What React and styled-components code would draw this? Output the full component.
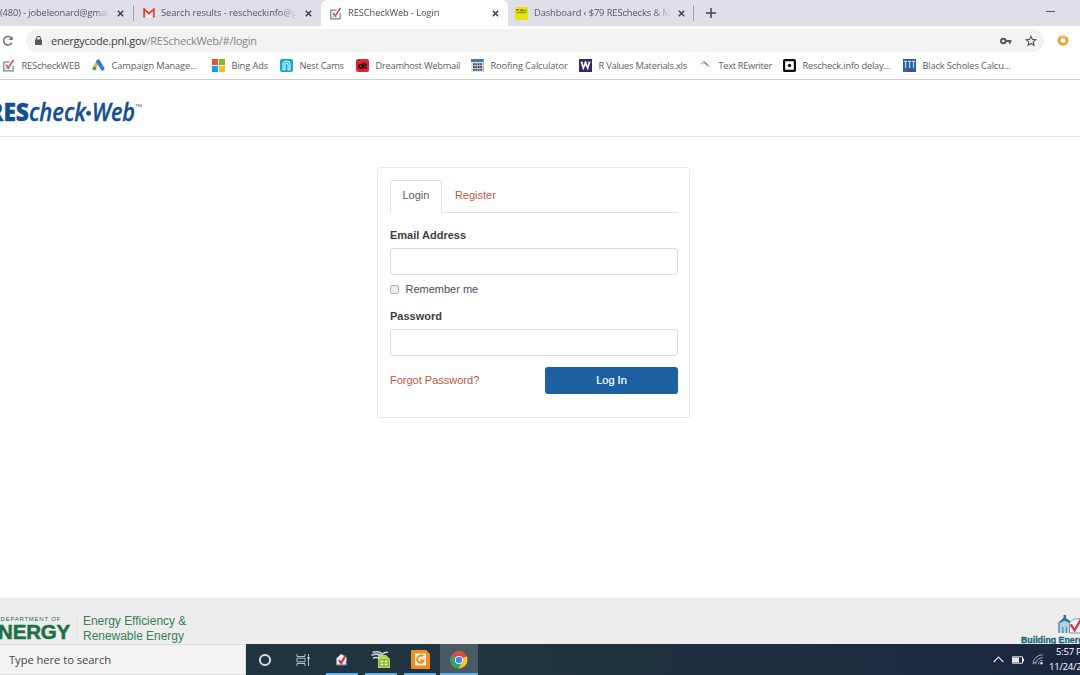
import React from "react";
import styled, { createGlobalStyle } from "styled-components";

const ui = `"Open Sans", "Noto Sans", sans-serif`;
const web = `"Liberation Sans", Arial, sans-serif`;

const TickIcon = ({ size = 13 }) => (
  <svg width={size} height={size} viewBox="0 0 13 13" fill="none">
    <path d="M7.5 3.2H1.8v8.6h9.3V6.5" stroke="#6686a4" strokeWidth="1.2" />
    <path d="M3.2 5.8h3M3.2 9.8h5" stroke="#a8c0d2" />
    <path d="M4.2 6.2 6.3 8.9 11.4 1" stroke="#d5564f" strokeWidth="1.7" />
  </svg>
);

const GmailIcon = () => (
  <svg width="12" height="10" viewBox="0 0 12 10" fill="none">
    <path d="M1.5 1h9v8h-9z" fill="#f5eeee" />
    <path d="M1.2 9.5V1.2L6 5.4l4.8-4.2v8.3" stroke="#d54b3d" strokeWidth="1.9" />
  </svg>
);

const DashIcon = () => (
  <svg width="13" height="13" viewBox="0 0 13 13">
    <path fill="#e6e600" d="M0 0h13v13H0z" />
    <path d="M1 2.8h3.2M5 2.8h3" stroke="#c75c24" strokeWidth="1.5" />
    <path d="M5 3.6h7M1.5 5.4h10" stroke="#8aa51d" strokeWidth="1.5" />
  </svg>
);

const AdsIcon = () => (
  <svg width="13" height="12" viewBox="0 0 13 12" fill="none" strokeLinecap="round">
    <path d="M5.6 2.8 2.4 9.2" stroke="#f4b820" strokeWidth="3.4" />
    <path d="M6.2 2.4 10.4 9.6" stroke="#3875df" strokeWidth="4" />
    <circle cx="2.4" cy="9.4" r="1.9" fill="#35a568" />
  </svg>
);

const BingIcon = () => (
  <svg width="13" height="13" viewBox="0 0 13 13">
    <path fill="#ed5129" d="M0 0h6v6H0z" />
    <path fill="#80b921" d="M7 0h6v6H7z" />
    <path fill="#0ba4e8" d="M0 7h6v6H0z" />
    <path fill="#fdba16" d="M7 7h6v6H7z" />
  </svg>
);

const NestIcon = () => (
  <svg width="13" height="13" viewBox="0 0 13 13" fill="none">
    <rect width="13" height="13" rx="2" fill="#18a8c8" />
    <path d="M3 10.8V5.7a3.5 3.5 0 0 1 7 0v5.1H8.1V6a1.6 1.6 0 0 0-3.2 0v4.8z" stroke="#e9f8fb" strokeWidth="1.1" />
  </svg>
);

const DreamIcon = () => (
  <svg width="13" height="13" viewBox="0 0 13 13" fill="none">
    <rect width="13" height="13" rx="2" fill="#d92830" />
    <circle cx="4.8" cy="7.3" r="1.8" stroke="#300b0c" strokeWidth="1.7" />
    <path d="M7.1 3.8v5.6M9.4 3.4v6h1.4M8.3 5.6h2.8" stroke="#300b0c" strokeWidth="1.4" />
  </svg>
);

const CalcIcon = () => (
  <svg width="13" height="13" viewBox="0 0 13 13">
    <path fill="#dde4e9" d="M0 0h13v13H0z" />
    <path fill="#4b7ba7" d="M0 0h13v3H0z" />
    <path d="M2 5.2h9M2 8h9M2 10.8h9" stroke="#3d4b58" strokeWidth="1.9" strokeDasharray="1.8 .6" />
    <path d="M12.5 1v12" stroke="#95afc4" />
  </svg>
);

const WIcon = () => (
  <svg width="13" height="13" viewBox="0 0 13 13" fill="none">
    <path fill="#382763" d="M0 0h13v13H0z" />
    <path d="M2.6 3.2 4.3 9 6.5 3.8 8.7 9l1.8-5.8" stroke="#fff" strokeWidth="1.7" />
    <path d="M1.4 3.2h2.5M5.4 3.2h2.2M9.2 3.2h2.4" stroke="#fff" />
  </svg>
);

const PenIcon = () => (
  <svg width="13" height="13" viewBox="0 0 13 13" fill="none">
    <path d="M2 5.2 5 3l5 4.4" stroke="#e398a6" strokeWidth="1.4" />
    <path d="m5 3 3.4 3.2" stroke="#cf6680" strokeWidth="1.2" />
  </svg>
);

const SquareIcon = () => (
  <svg width="13" height="13" viewBox="0 0 13 13" fill="none">
    <rect x="1.1" y="1.1" width="10.8" height="10.8" rx=".6" stroke="#0b0b0b" strokeWidth="2.2" />
    <circle cx="6.5" cy="6.5" r="1.7" fill="#111" />
  </svg>
);

const ScholesIcon = () => (
  <svg width="13" height="13" viewBox="0 0 13 13" fill="none">
    <path fill="#255f9e" d="M0 0h13v13H0z" />
    <path d="M.8 2.3h3.4M4.9 2.3h3.4M9 2.3h3.2M2.6 2.3v7M6.6 2.3v7M10.5 2.3v7" stroke="#b4d6f1" strokeWidth="1.3" />
    <path d="M0 11.8h4" stroke="#2a7d6c" strokeWidth="1.6" />
    <path d="M4 11.8h5" stroke="#8a345d" strokeWidth="1.6" />
  </svg>
);

const CloseIcon = () => (
  <svg width="7" height="7" viewBox="0 0 7 7">
    <path d="m.8.8 5.4 5.4M6.2.8.8 6.2" stroke="#3f4045" strokeWidth="1.5" />
  </svg>
);

const TABS = [
  { id: 1, width: 134, pad: 0, textWidth: 109, title: "(480) - jobeleonard@gmai", spacing: -0.12, divider: true },
  { id: 2, width: 187, pad: 8, textWidth: 136, title: "Search results - rescheckinfo@gm", spacing: -0.05, icon: <GmailIcon /> },
  { id: 3, width: 187, pad: 8, textWidth: 136, title: "RESCheckWeb - Login", spacing: -0.08, icon: <TickIcon />, active: true },
  { id: 4, width: 186, pad: 7, textWidth: 136, title: "Dashboard ‹ $79 RESchecks & M", spacing: -0.08, icon: <DashIcon />, divider: true }
];

const BOOKMARKS = [
  { name: "REScheckWEB", width: 90, spacing: -0.2, icon: <TickIcon /> },
  { name: "Campaign Manage...", width: 120, spacing: -0.14, icon: <AdsIcon /> },
  { name: "Bing Ads", width: 68, spacing: -0.12, icon: <BingIcon /> },
  { name: "Nest Cams", width: 76, spacing: -0.25, icon: <NestIcon /> },
  { name: "Dreamhost Webmail", width: 115, spacing: -0.25, icon: <DreamIcon /> },
  { name: "Roofing Calculator", width: 108, spacing: -0.12, icon: <CalcIcon /> },
  { name: "R Values Materials.xls", width: 120, spacing: -0.22, icon: <WIcon /> },
  { name: "Text REwriter", width: 84, spacing: -0.32, icon: <PenIcon /> },
  { name: "Rescheck.info delay...", width: 120, spacing: -0.2, icon: <SquareIcon /> },
  { name: "Black Scholes Calcu...", width: 120, spacing: -0.15, icon: <ScholesIcon /> }
];

const Browser = () => (
  <>
    <TabStrip>
      {TABS.map(tab => (
        <Tab key={tab.id} $width={tab.width} $pad={tab.pad} $active={tab.active} $divider={tab.divider}>
          {tab.icon && <TabIcon>{tab.icon}</TabIcon>}
          <TabTitle $width={tab.textWidth} $spacing={tab.spacing} $active={tab.active}>{tab.title}</TabTitle>
          <CloseIcon />
        </Tab>
      ))}
      <NewTab>
        <svg width="10" height="10" viewBox="0 0 10 10">
          <path d="M5 0v10M0 5h10" stroke="#3f4045" strokeWidth="1.5" />
        </svg>
      </NewTab>
      <Minimize />
    </TabStrip>
    <Toolbar>
      <svg width="12" height="12" viewBox="0 0 12 12" fill="none">
        <path d="M9.6 3.4A4.3 4.3 0 1 0 9.8 7.6" stroke="#66676a" strokeWidth="1.4" />
        <path d="M10.6 1.2v3.9H6.7z" fill="#66676a" />
      </svg>
      <Omnibox>
        <svg width="7" height="9" viewBox="0 0 7 9" fill="none">
          <path d="M0 3.5h7V9H0z" fill="#58595c" />
          <path d="M1.6 4V2.3a1.9 1.9 0 0 1 3.8 0V4" stroke="#58595c" strokeWidth="1.1" />
        </svg>
        <Url>energycode.pnl.gov<span>/REScheckWeb/#/login</span></Url>
        <svg width="12" height="8" viewBox="0 0 12 8" fill="none">
          <circle cx="3.4" cy="4" r="2.3" stroke="#58595c" strokeWidth="2" />
          <path d="M5.5 4h6M9.8 4v2.8" stroke="#58595c" strokeWidth="2" />
        </svg>
        <svg width="12" height="12" viewBox="0 0 12 12" fill="none">
          <path d="m6 1.3 1.4 3.1 3.4.3-2.6 2.2.8 3.4L6 8.5l-3 1.8.8-3.4L1.2 4.7l3.4-.3z" stroke="#58595c" strokeWidth="1.1" />
        </svg>
      </Omnibox>
      <svg width="12" height="11" viewBox="0 0 12 11" fill="none">
        <ellipse cx="6" cy="5.5" rx="4.1" ry="3.7" stroke="#eda02b" strokeWidth="2.8" />
        <path d="M3 2.2a5 4 0 0 1 6 0" stroke="#f6ca70" strokeWidth="1.2" />
      </svg>
    </Toolbar>
    <BookmarkBar>
      {BOOKMARKS.map(b => (
        <Bookmark key={b.name} $width={b.width}>
          {b.icon}
          <BookmarkName $spacing={b.spacing}>{b.name}</BookmarkName>
        </Bookmark>
      ))}
    </BookmarkBar>
  </>
);

const LoginCard = () => (
  <Card>
    <CardTabs>
      <CardTab $active>Login</CardTab>
      <CardTab>Register</CardTab>
    </CardTabs>
    <FieldLabel htmlFor="email">Email Address</FieldLabel>
    <Field id="email" />
    <Remember>
      <Checkbox type="checkbox" />
      Remember me
    </Remember>
    <FieldLabel htmlFor="password">Password</FieldLabel>
    <Field id="password" type="password" />
    <Actions>
      <Forgot>Forgot Password?</Forgot>
      <Submit>Log In</Submit>
    </Actions>
  </Card>
);

const Footer = () => (
  <FooterBar>
    <Doe>
      <DoeSmall>DEPARTMENT OF</DoeSmall>
      <DoeName>ENERGY</DoeName>
    </Doe>
    <Office>
      Energy Efficiency &amp;
      <br />
      Renewable Energy
    </Office>
    <Codes>
      <svg width="30" height="20" viewBox="0 0 30 20" fill="none">
        <path d="M1 18V8.5l6.5-5 6.5 5V18z" fill="#b4d3dc" />
        <path d="M0 9.2 3 6l4.5-4L13 6l2 3.2-7.5-3.4zM6.5 4V0h2.6v4z" fill="#30768e" />
        <path d="M12.5 18V8.2c2-4 8-6 13.5-3.2l3 4V18z" fill="#edf4f5" stroke="#6c9fae" />
        <path d="M2 9v9M5.8 12v6M9.5 12v6" stroke="#5595a8" strokeWidth="1.4" />
        <path d="m13.8 9.5 3.8 5.8L25 2.5" stroke="#d63846" strokeWidth="2.4" />
      </svg>
      <CodesName>Building Energy Codes</CodesName>
    </Codes>
  </FooterBar>
);

const Taskbar = () => (
  <TaskbarWrap>
    <Search>Type here to search</Search>
    <TaskItem $width={37}>
      <svg width="14" height="14" viewBox="0 0 14 14">
        <circle cx="7" cy="7" r="5.1" fill="none" stroke="#d8e0e4" strokeWidth="2" />
      </svg>
    </TaskItem>
    <TaskItem $width={39}>
      <svg width="14" height="12" viewBox="0 0 14 12" fill="none">
        <path d="M1 0v2.5h8V0M1 12V9.5h8V12M1 4.2h8v3.6H1zM12.5 0v2.6M12.5 5v7" stroke="#b5c0c4" />
        <path fill="#dfe5e7" d="M11.5 3h2v2h-2z" />
      </svg>
    </TaskItem>
    <TaskItem $width={40} $open>
      <svg width="12" height="13" viewBox="0 0 12 13" fill="none">
        <path d="M.5 12V5.5L5 1l5.5 3v8z" fill="#edf0f5" />
        <path d="M1 12.2h9.5V8" stroke="#4e62a5" strokeWidth="1.3" />
        <path d="m2.8 7.2 2.4 3 4.5-8" stroke="#d72f3e" strokeWidth="2.1" />
      </svg>
    </TaskItem>
    <TaskItem $width={38} $open>
      <svg width="20" height="19" viewBox="0 0 20 19" fill="none">
        <path d="M7 5h8l4 4v9H7z" fill="#b8d653" />
        <path d="M9 10h8v5.8H9z" fill="#f1f7dc" stroke="#6f9b28" />
        <path d="M13 10v6M9 13h8" stroke="#6f9b28" />
        <path d="M1.5 2.2c5-1 8-.5 10 2 2-2 3.5-2.2 5.5-1.7M.5 5.2c4-1.5 8-1.2 10.5.8M2 8.3c2-1 4-1 6 0" stroke="#c9d6da" strokeWidth="1.6" />
      </svg>
    </TaskItem>
    <TaskItem $width={40} $open>
      <svg width="19" height="19" viewBox="0 0 19 19" fill="none">
        <path d="M0 0h15l4 4v15H0z" fill="#ee8d22" />
        <path d="M4 3.5h11v12H4z" fill="#fcecd9" />
        <path d="M12.5 5.6C8 4.7 5.6 7.4 6.2 10.3c.7 3 5.2 3.6 6.3.3H9.2" stroke="#ee8d22" strokeWidth="1.8" />
      </svg>
    </TaskItem>
    <TaskItem $width={38} $open $active>
      <svg width="18" height="18" viewBox="0 0 18 18">
        <circle cx="9" cy="9" r="8.5" fill="#f5c52c" />
        <path d="M9 9 1.6 4.8A8.5 8.5 0 0 1 16.5 5z" fill="#dd4b3e" />
        <path d="M9 9 1.6 4.8A8.5 8.5 0 0 0 8.4 17.5l3-5.3z" fill="#2da462" />
        <path d="M9 5h7.4" stroke="#dd4b3e" strokeWidth="2" />
        <circle cx="9" cy="9" r="4.1" fill="#fff" />
        <circle cx="9" cy="9" r="3.2" fill="#4387ed" />
      </svg>
    </TaskItem>
    <Tray>
      <svg width="11" height="7" viewBox="0 0 11 7" fill="none">
        <path d="m.7 6 4.8-4.8L10.3 6" stroke="#dce0e7" strokeWidth="1.2" />
      </svg>
      <svg width="12" height="8" viewBox="0 0 12 8" fill="none">
        <path d="M.5.8h10v6.4H.5z" stroke="#e6e9ec" />
        <path d="M1 1.5h6v5H1zM10.5 2.5H12v3h-1.5z" fill="#e6e9ec" />
      </svg>
      <svg width="12" height="11" viewBox="0 0 12 11" fill="none">
        <path d="M1 10A9.5 9.5 0 0 1 10.6.8M3.7 10.2a6.8 6.8 0 0 1 7-6.5M6.3 10.3a4 4 0 0 1 4.4-3.8" stroke="#a7afbd" />
        <circle cx="9.5" cy="9.2" r="1.2" fill="#e0e4ea" />
        <path d="M1.2 10.2 4 7.5" stroke="#a7afbd" />
      </svg>
    </Tray>
    <Clock>
      <span>5:57 PM</span>
      <span>11/24/2019</span>
    </Clock>
  </TaskbarWrap>
);

const App = () => (
  <Screen>
    <GlobalStyle />
    <Browser />
    <Header>
      <svg width="150" height="34" viewBox="0 0 150 34">
        <g fill="#164f91" stroke="#164f91" strokeWidth=".35" fontFamily={ui} fontSize="24.5">
          <text x="-12" y="26" fontWeight="800" textLength="41" lengthAdjust="spacingAndGlyphs">RES</text>
          <text x="29" y="26" fontWeight="600" fontStyle="italic" textLength="57" lengthAdjust="spacingAndGlyphs">check</text>
          <circle cx="88.6" cy="18.3" r="2.3" />
          <text x="92" y="26" fontWeight="600" fontStyle="italic" textLength="43" lengthAdjust="spacingAndGlyphs">Web</text>
        </g>
        <text x="135.5" y="15" fontFamily={ui} fontSize="8" fill="#4a74a5" textLength="7" lengthAdjust="spacingAndGlyphs">™</text>
      </svg>
    </Header>
    <Main>
      <LoginCard />
    </Main>
    <Footer />
    <Taskbar />
  </Screen>
);

export default App;

const GlobalStyle = createGlobalStyle`
  * {
    box-sizing: border-box;
  }
  body {
    margin: 0;
    overflow: hidden;
  }
  svg {
    display: block;
    flex-shrink: 0;
  }
`;

const Screen = styled.div`
  display: flex;
  flex-direction: column;
  width: 1080px;
  height: 675px;
  overflow: hidden;
  background: #fff;
  font-family: ${ui};
`;

const TabStrip = styled.div`
  display: flex;
  height: 26px;
  flex-shrink: 0;
  background: #e0dfe9;
`;

const Tab = styled.div`
  display: flex;
  align-items: center;
  width: ${props => props.$width}px;
  height: 26px;
  flex-shrink: 0;
  padding-left: ${props => props.$pad}px;
  background: ${props => (props.$active ? "#fff" : "transparent")};
  border-radius: 6px 6px 0 0;

  ${props =>
    props.$divider &&
    `background: linear-gradient(#a3a3aa, #a3a3aa) right center / 1px 16px no-repeat;`}
`;

const TabIcon = styled.div`
  display: flex;
  justify-content: center;
  width: 13px;
  margin-right: 6px;
`;

const TabTitle = styled.div`
  width: ${props => props.$width}px;
  margin-right: 8px;
  overflow: hidden;
  white-space: nowrap;
  font-size: 9.3px;
  line-height: 16px;
  letter-spacing: ${props => props.$spacing}px;
  color: ${props => (props.$active ? "#4b4c50" : "#55565c")};
  mask-image: linear-gradient(to right, #000 88%, transparent);
`;

const NewTab = styled.div`
  display: flex;
  align-items: center;
  padding-left: 12px;
`;

const Minimize = styled.div`
  width: 9px;
  height: 1px;
  margin: 11px 25px 0 auto;
  background: #55565c;
`;

const Toolbar = styled.div`
  display: flex;
  align-items: center;
  height: 29px;
  flex-shrink: 0;
  padding-left: 2px;
`;

const Omnibox = styled.div`
  display: flex;
  align-items: center;
  width: 1018px;
  height: 23px;
  margin: 0 13px 0 12px;
  padding: 0 7px 0 9px;
  border-radius: 12px;
  background: #f2f2f2;

  svg:last-child {
    margin-left: 13px;
  }
`;

const Url = styled.div`
  flex: 1;
  margin-left: 9px;
  font-size: 11px;
  letter-spacing: -0.25px;
  color: #3c3d40;

  span {
    color: #85868a;
  }
`;

const BookmarkBar = styled.div`
  display: flex;
  height: 25px;
  flex-shrink: 0;
  padding: 0 0 4px 2px;
  border-bottom: 1px solid #cfcfcf;
`;

const Bookmark = styled.div`
  display: flex;
  align-items: center;
  gap: 6.5px;
  width: ${props => props.$width}px;
  flex-shrink: 0;
`;

const BookmarkName = styled.span`
  white-space: nowrap;
  font-size: 9.3px;
  letter-spacing: ${props => props.$spacing}px;
  color: #5b5c60;
`;

const Header = styled.header`
  height: 57px;
  flex-shrink: 0;
  padding-top: 15px;
  border-bottom: 1px solid #e4e4e4;
`;

const Main = styled.main`
  flex: 1;
  padding: 30px 0 0 377px;
`;

const Card = styled.div`
  width: 313px;
  height: 251px;
  padding: 12px 11px 0 12px;
  border: 1px solid #e9e9e9;
  border-radius: 3px;
  font-family: ${web};
  font-size: 11px;
  color: #4c4c4c;
`;

const CardTabs = styled.div`
  display: flex;
  height: 33px;
  margin-bottom: 15px;
  border-bottom: 1px solid #e2e2e2;
`;

const CardTab = styled.div`
  height: 33px;
  padding: 0 12px 0 11.5px;
  border: 1px solid ${props => (props.$active ? "#e2e2e2" : "transparent")};
  border-bottom-color: ${props => (props.$active ? "#fff" : "transparent")};
  border-radius: 3px 3px 0 0;
  line-height: 29px;
  color: ${props => (props.$active ? "#5a5a5a" : "#b9593f")};
`;

const FieldLabel = styled.label`
  display: block;
  height: 14px;
  margin-bottom: 6px;
  line-height: 14px;
  font-weight: bold;
  color: #3e3e42;
`;

const Field = styled.input`
  display: block;
  width: 288px;
  height: 27px;
  border: 1px solid #dcdcdc;
  border-radius: 3px;
  background: #fff;
`;

const Remember = styled.label`
  display: flex;
  align-items: center;
  height: 14px;
  margin: 7px 0 13px;
`;

const Checkbox = styled.input`
  appearance: none;
  width: 9px;
  height: 9px;
  margin: 0 6.5px 0 0;
  border: 1px solid #b4b4b4;
  border-radius: 2px;
  background: #ececec;
`;

const Actions = styled.div`
  display: flex;
  align-items: center;
  justify-content: space-between;
  margin-top: 11px;
`;

const Forgot = styled.a`
  padding-bottom: 1px;
  color: #b9593f;
`;

const Submit = styled.button`
  width: 133px;
  height: 27px;
  padding: 0 0 1px;
  border: 0;
  border-radius: 3px;
  background: #1d60a1;
  font-family: ${web};
  font-size: 11px;
  -webkit-text-stroke: 0.2px #fff;
  color: #fff;
`;

const FooterBar = styled.footer`
  display: flex;
  height: 46px;
  flex-shrink: 0;
  overflow: hidden;
  background: #ededed;
  font-family: ${web};
`;

const Doe = styled.div`
  display: flex;
  flex-direction: column;
  align-items: flex-end;
  width: 77px;
  padding: 18px 7px 0 0;
  background: linear-gradient(#e9e3cc, #e9e3cc) right 17px / 1px 26px no-repeat;
  white-space: nowrap;
  color: #1b713f;
`;

const DoeSmall = styled.div`
  padding-right: 9px;
  font-size: 6px;
  line-height: 6px;
  letter-spacing: 0.75px;
`;

const DoeName = styled.div`
  font-size: 20.5px;
  font-weight: bold;
  line-height: 20px;
  letter-spacing: -0.2px;
  -webkit-text-stroke: 0.5px #1b713f;
`;

const Office = styled.div`
  padding: 16px 0 0 6px;
  font-size: 12px;
  line-height: 14.5px;
  letter-spacing: -0.03px;
  white-space: nowrap;
  color: #358055;
`;

const Codes = styled.div`
  width: 60px;
  margin-left: auto;
  padding-top: 17px;

  svg {
    margin-left: 37px;
  }
`;

const CodesName = styled.div`
  padding-left: 1px;
  font-size: 8.8px;
  font-weight: bold;
  line-height: 10px;
  white-space: nowrap;
  -webkit-text-stroke: 0.3px #176580;
  color: #176580;
`;

const TaskbarWrap = styled.div`
  display: flex;
  height: 31px;
  flex-shrink: 0;
  background: linear-gradient(to right, #20353f 45%, #1b2740);
  color: #fff;
`;

const Search = styled.div`
  width: 246px;
  flex-shrink: 0;
  padding-left: 9px;
  border: solid #dcdcdc;
  border-width: 1px 1px 1px 0;
  background: #f3f3f3;
  font-size: 11.2px;
  line-height: 29px;
  letter-spacing: -0.05px;
  color: #48484a;
`;

const TaskItem = styled.div`
  display: flex;
  align-items: center;
  justify-content: center;
  width: ${props => props.$width}px;
  flex-shrink: 0;
  background-color: ${props => (props.$active ? "#4a5a65" : "transparent")};
  background-image: ${props => (props.$open ? "linear-gradient(#69aee0, #69aee0)" : "none")};
  background-repeat: no-repeat;
  background-position: center bottom;
  background-size: ${props => (props.$active ? "100%" : "32px")} 2px;
`;

const Tray = styled.div`
  display: flex;
  align-items: center;
  gap: 8px;
  margin-left: auto;
`;

const Clock = styled.div`
  display: flex;
  flex-direction: column;
  align-items: center;
  width: 50px;
  margin: 1px -18px 0 4px;
  white-space: nowrap;
  font-size: 9.6px;
  line-height: 14.5px;
  letter-spacing: -0.3px;
`;
